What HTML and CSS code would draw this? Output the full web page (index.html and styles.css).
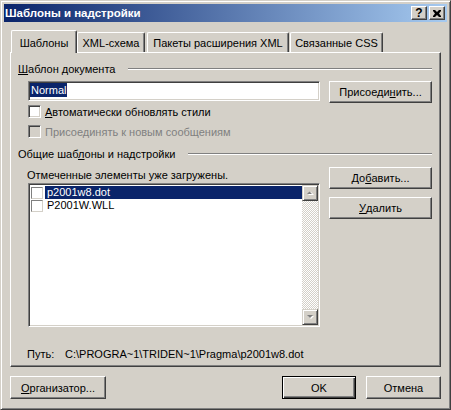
FILE: index.html
```html
<!DOCTYPE html>
<html lang="ru">
<head>
  <meta charset="UTF-8">
  <title>Шаблоны и надстройки</title>
  <link rel="stylesheet" href="styles.css">
</head>
<body>
  <div class="window">
    <!-- Title bar -->
    <div class="titlebar">
      <span class="title">Шаблоны и надстройки</span>
      <div class="caption-buttons">
        <span class="cap-btn cap-help">?</span>
        <span class="cap-btn">
          <svg width="8" height="7" viewBox="0 0 8 7"><path d="M0 0h2l2 2 2-2h2v1L6 3.5 8 6v1H6L4 5 2 7H0V6l2-2.5L0 1z" fill="#000"/></svg>
        </span>
      </div>
    </div>

    <div class="client">
      <!-- Tabs -->
      <div class="tabs">
        <div class="tab tab-active tab-templates">Шаблоны</div>
        <div class="tab tab-xml">XML-схема</div>
        <div class="tab tab-packs">Пакеты расширения XML</div>
        <div class="tab tab-css">Связанные CSS</div>
      </div>

      <div class="panel">
        <!-- Document template -->
        <div class="group-head">
          <span><u>Ш</u>аблон документа</span>
          <span class="etch"></span>
        </div>
        <div class="template-row">
          <div class="field"><span class="field-sel">Normal</span></div>
          <div class="btn btn-side">Присоеди<u>н</u>ить...</div>
        </div>
        <div class="check check-first">
          <span class="box"></span>
          <span><u>А</u>втоматически обновлять стили</span>
        </div>
        <div class="check check-disabled">
          <span class="box"></span>
          <span>Присоединять к новым сообщениям</span>
        </div>

        <!-- Global templates and add-ins -->
        <div class="group-head group-second">
          <span>Общие шаб<u>л</u>оны и надстройки</span>
          <span class="etch"></span>
        </div>
        <div class="addins">
          <div class="addins-left">
            <div class="caption">Отмеченные элементы уже загружены.</div>
            <div class="listbox">
              <div class="list-items">
                <div class="item item-selected">
                  <span class="item-box"></span>
                  <span class="item-text">p2001w8.dot</span>
                </div>
                <div class="item">
                  <span class="item-box"></span>
                  <span class="item-text">P2001W.WLL</span>
                </div>
              </div>
              <div class="scrollbar">
                <div class="sb-btn">
                  <svg width="7" height="5" viewBox="0 0 7 5"><path d="M1 4h6L4 1z" fill="#fff"/><path d="M0 3h5L2.5 0.5z" fill="#808080"/></svg>
                </div>
                <div class="sb-track"></div>
                <div class="sb-btn">
                  <svg width="7" height="5" viewBox="0 0 7 5"><path d="M1 1h6L4 4z" fill="#fff"/><path d="M0 0h6L3 3z" fill="#808080"/></svg>
                </div>
              </div>
            </div>
          </div>
          <div class="addins-right">
            <div class="btn btn-side">До<u>б</u>авить...</div>
            <div class="btn btn-side btn-remove"><u>У</u>далить</div>
          </div>
        </div>

        <div class="path">
          <span class="path-label">Путь:</span>
          <span>C:\PROGRA~1\TRIDEN~1\Pragma\p2001w8.dot</span>
        </div>
      </div>

      <!-- Footer buttons -->
      <div class="footer">
        <div class="btn btn-organizer"><u>О</u>рганизатор...</div>
        <div class="btn btn-default">OK</div>
        <div class="btn btn-cancel">Отмена</div>
      </div>
    </div>
  </div>
</body>
</html>
```

FILE: styles.css
```css
body {
  margin: 0;
  font-family: "Liberation Sans", Arial, sans-serif;
  font-size: 11px;
  color: #000;
  background: #d4d0c8;
}
u {
  text-decoration: underline;
  text-underline-offset: 1px;
}
.window {
  width: 451px;
  height: 410px;
  box-sizing: border-box;
  padding: 3px;
  background: #d4d0c8;
  border: 1px solid;
  border-color: #d4d0c8 #404040 #404040 #d4d0c8;
  box-shadow: inset 1px 1px #fff, inset -1px -1px #808080;
}

/* title bar */
.titlebar {
  height: 18px;
  display: flex;
  align-items: center;
  padding-left: 1px;
  background: linear-gradient(to right, #0a246a, #a6caf0);
}
.title {
  flex: 1;
  color: #fff;
  font-weight: bold;
  font-size: 11.5px;
}
.caption-buttons {
  display: flex;
  gap: 2px;
  margin-right: 2px;
}
.cap-btn {
  width: 16px;
  height: 14px;
  box-sizing: border-box;
  display: flex;
  align-items: center;
  justify-content: center;
  background: #d4d0c8;
  border: 1px solid;
  border-color: #fff #404040 #404040 #fff;
  box-shadow: inset -1px -1px #808080;
}
.cap-help {
  font-weight: bold;
  font-size: 12px;
  line-height: 12px;
}

/* tabs */
.client {
  padding: 0 6px;
}
.tabs {
  display: flex;
  align-items: flex-end;
  height: 22px;
  margin-top: 8px;
  padding-left: 1px;
}
.tab {
  box-sizing: border-box;
  height: 20px;
  padding-top: 3px;
  line-height: 14px;
  text-align: center;
  border: 1px solid;
  border-bottom: none;
  border-color: #fff #404040 #404040 #fff;
  border-radius: 2px 2px 0 0;
  box-shadow: inset -1px 0 #808080;
}
.tab-active {
  height: 23px;
  padding-top: 5px;
  margin-bottom: -1px;
  position: relative;
  z-index: 1;
  background: #d4d0c8;
}
.tab-templates { width: 66px; }
.tab-xml { width: 68px; }
.tab-packs { width: 142px; margin-left: 2px; }
.tab-css { width: 93px; margin-left: 1px; }

.panel {
  box-sizing: border-box;
  width: 431px;
  height: 315px;
  padding: 0 8px 0 7px;
  border: 1px solid;
  border-color: #fff #404040 #404040 #fff;
  box-shadow: inset -1px -1px #808080;
}

.group-head {
  display: flex;
  align-items: center;
  gap: 13px;
  height: 14px;
  line-height: 14px;
  margin-top: 9px;
}
.etch {
  flex: 1;
  border-top: 1px solid #808080;
  border-bottom: 1px solid #fff;
}

.template-row {
  display: flex;
  align-items: flex-start;
  gap: 9px;
  margin: 5px 0 0 10px;
}
.field {
  box-sizing: border-box;
  width: 292px;
  height: 20px;
  background: #fff;
  border: 1px solid;
  border-color: #808080 #fff #fff #808080;
  box-shadow: inset 1px 1px #404040, inset -1px -1px #d4d0c8;
  padding: 1px 0 0 1px;
}
.field-sel {
  display: inline-block;
  height: 14px;
  line-height: 14px;
  padding: 0 1px;
  background: #0a246a;
  color: #fff;
}

.btn {
  box-sizing: border-box;
  display: flex;
  align-items: center;
  justify-content: center;
  background: #d4d0c8;
  border: 1px solid;
  border-color: #fff #404040 #404040 #fff;
  box-shadow: inset -1px -1px #808080;
}
.btn-side {
  width: 103px;
  height: 22px;
}

.check {
  display: flex;
  align-items: center;
  gap: 4px;
  height: 13px;
  margin-left: 10px;
}
.check-first { margin-top: 2px; }
.check-disabled {
  margin-top: 7px;
  color: #808080;
}
.box {
  box-sizing: border-box;
  width: 13px;
  height: 13px;
  background: #fff;
  border: 1px solid;
  border-color: #808080 #fff #fff #808080;
  box-shadow: inset 1px 1px #404040, inset -1px -1px #d4d0c8;
}
.check-disabled .box {
  background: #d4d0c8;
}

.addins {
  display: flex;
  margin: 6px 0 0 10px;
}
.addins-left {
  width: 292px;
}
.caption {
  margin: 1px 0 0 -1px;
  height: 14px;
  line-height: 14px;
}
.listbox {
  box-sizing: border-box;
  margin-top: 1px;
  width: 292px;
  height: 144px;
  display: flex;
  background: #fff;
  border: 1px solid;
  border-color: #808080 #fff #fff #808080;
  box-shadow: inset 1px 1px #404040, inset -1px -1px #d4d0c8;
  padding: 1px;
}
.list-items {
  flex: 1;
  padding: 1px 0 0 1px;
}
.item {
  display: flex;
  align-items: center;
  height: 13px;
}
.item-box {
  box-sizing: border-box;
  width: 12px;
  height: 12px;
  background: #fff;
  border: 1px solid;
  border-color: #808080 #d4d0c8 #d4d0c8 #808080;
  margin-right: 2px;
}
.item-text {
  flex: 1;
  height: 13px;
  line-height: 13px;
  padding-left: 2px;
}
.item-selected .item-text {
  background: #0a246a;
  color: #fff;
}
.scrollbar {
  width: 16px;
  display: flex;
  flex-direction: column;
}
.sb-btn {
  box-sizing: border-box;
  height: 16px;
  display: flex;
  align-items: center;
  justify-content: center;
  background: #d4d0c8;
  border: 1px solid;
  border-color: #d4d0c8 #404040 #404040 #d4d0c8;
  box-shadow: inset 1px 1px #fff, inset -1px -1px #808080;
}
.sb-track {
  flex: 1;
  background: repeating-conic-gradient(#fff 0 25%, #d4d0c8 0 50%) 0 0 / 2px 2px;
}
.addins-right {
  display: flex;
  flex-direction: column;
  margin-left: 9px;
}
.btn-remove { margin-top: 8px; }

.path {
  display: flex;
  margin: 20px 0 0 9px;
  height: 14px;
  line-height: 14px;
}
.path-label { width: 38px; }

.footer {
  display: flex;
  margin-top: 9px;
}
.btn-organizer { width: 96px; height: 23px; }
.btn-default {
  width: 74px;
  height: 23px;
  margin-left: auto;
  border-color: #000;
  box-shadow: inset 1px 1px #fff, inset -1px -1px #404040, inset -2px -2px #808080;
}
.btn-cancel { width: 75px; height: 23px; margin-left: 10px; }
```
